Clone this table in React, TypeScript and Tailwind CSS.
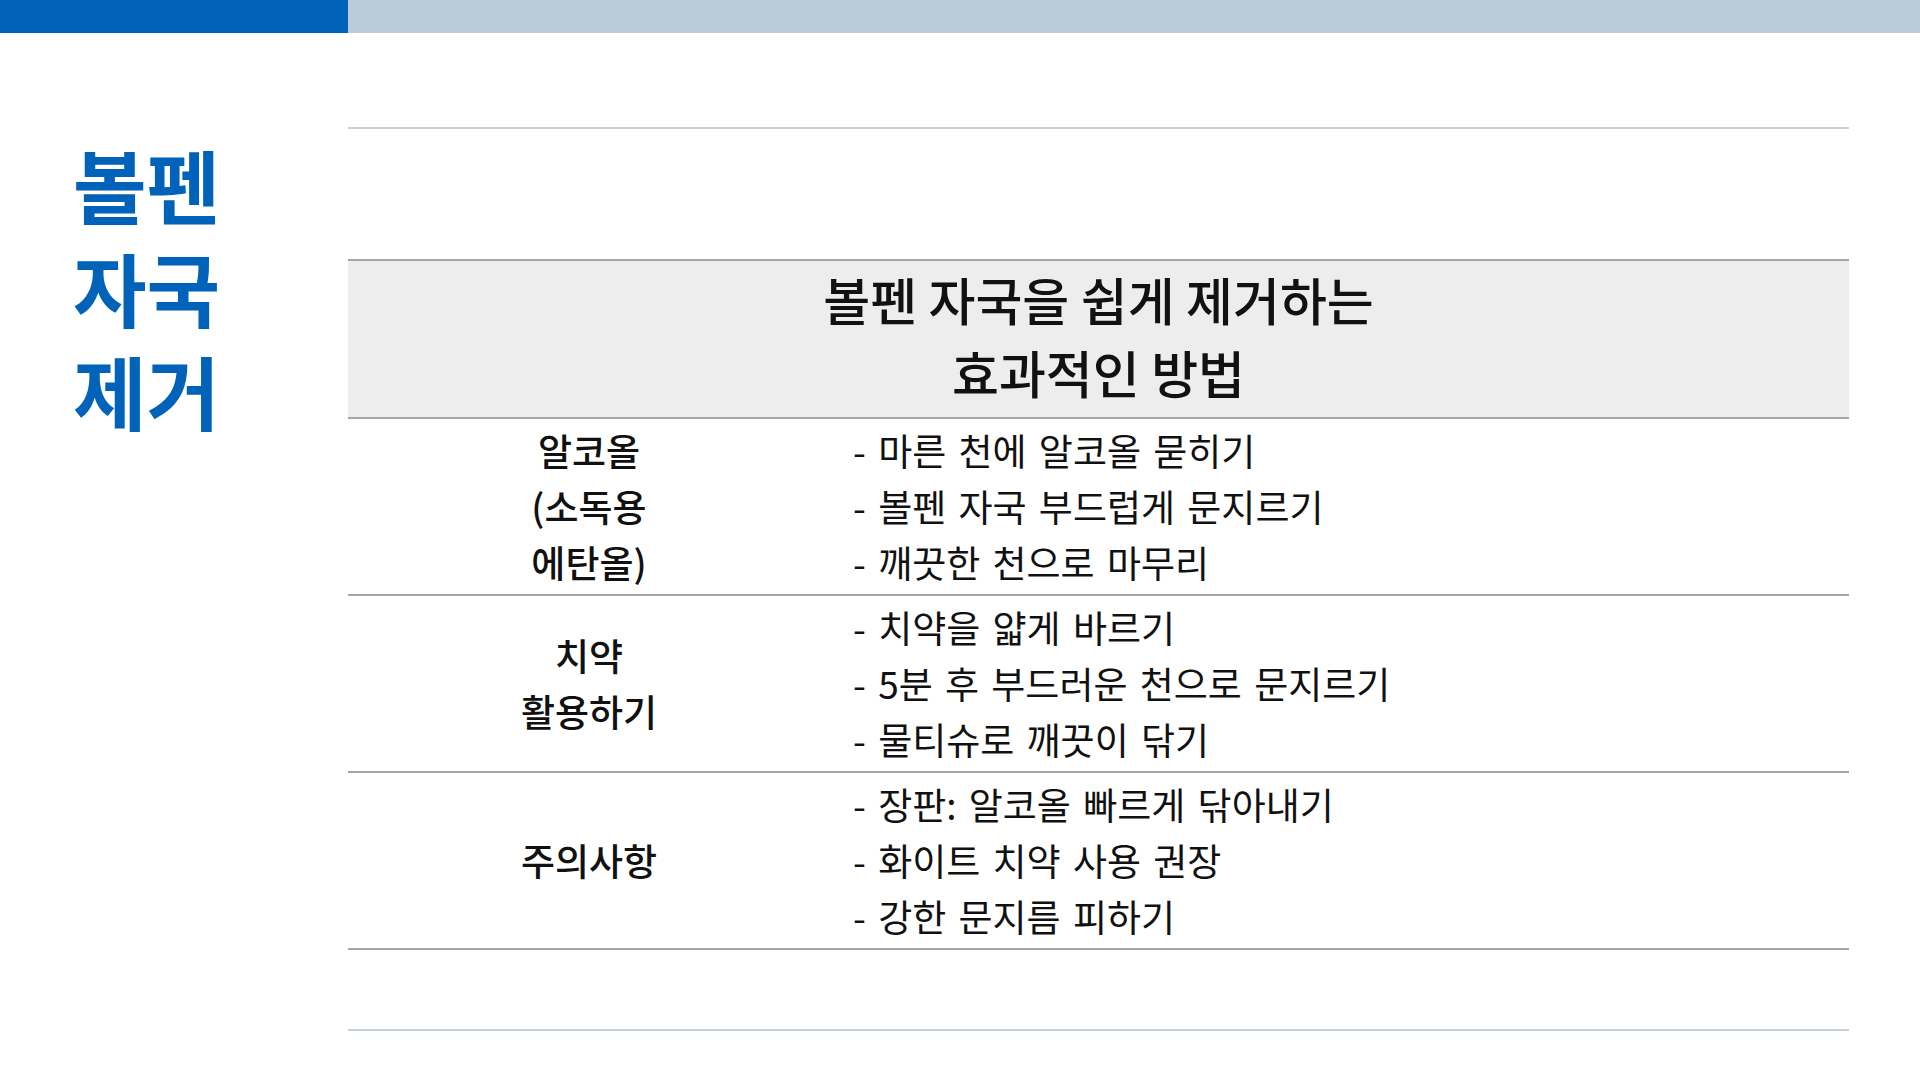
const rows = [
  {
    label: ["알코올", "(소독용", "에탄올)"],
    items: ["- 마른 천에 알코올 묻히기", "- 볼펜 자국 부드럽게 문지르기", "- 깨끗한 천으로 마무리"],
  },
  {
    label: ["치약", "활용하기"],
    items: ["- 치약을 얇게 바르기", "- 5분 후 부드러운 천으로 문지르기", "- 물티슈로 깨끗이 닦기"],
  },
  {
    label: ["주의사항"],
    items: ["- 장판: 알코올 빠르게 닦아내기", "- 화이트 치약 사용 권장", "- 강한 문지름 피하기"],
  },
]

export default function App() {
  return (
    <div className="min-h-[1080px] w-[1920px] bg-white font-['Noto_Sans_CJK_KR',sans-serif] text-[#111111]">
      <div className="flex h-[33px]">
        <div className="w-[348px] bg-[#0062b8]" />
        <div className="flex-1 bg-[#bccbd9]" />
      </div>

      <div className="flex">
        <div className="w-[348px] pl-[73px] pt-[99px]">
          <h1 className="text-[80px] font-bold leading-[103px] text-[#0062b8]">
            볼펜
            <br />
            자국
            <br />
            제거
          </h1>
        </div>

        <div className="mt-[94px] w-[1501px]">
          <div className="h-[132px] border-t-2 border-[#c3d0dd]" />

          <div className="border-y-2 border-[#a6a6a6] bg-[#ededed] pt-[2px] pb-[8px] text-center text-[51px] font-medium leading-[73px]">
            볼펜 자국을 쉽게 제거하는
            <br />
            효과적인 방법
          </div>

          {rows.map((row) => (
            <div
              key={row.label.join("")}
              className="flex h-[177px] items-center border-b-2 border-[#a6a6a6] pb-[1px]"
            >
              <div className="w-[482px] text-center text-[37px] font-medium leading-[56px]">
                {row.label.map((line) => (
                  <div key={line}>{line}</div>
                ))}
              </div>
              <div className="pl-[23px] text-[37px] leading-[56px] [word-spacing:4px]">
                {row.items.map((item) => (
                  <div key={item}>{item}</div>
                ))}
              </div>
            </div>
          ))}

          <div className="mt-[79px] border-t-2 border-[#c3d0dd]" />
        </div>
      </div>
    </div>
  )
}
